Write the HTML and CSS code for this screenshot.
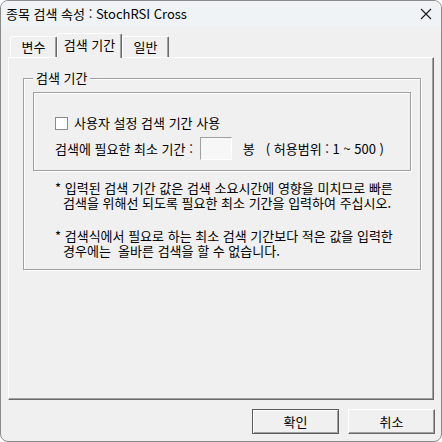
FILE: index.html
```html
<!DOCTYPE html>
<html lang="ko">

<head>
    <meta charset="UTF-8">
    <title>종목 검색 속성</title>
    <link rel="stylesheet" href="styles.css">
</head>

<body>

    <div class="window">
        <header class="titlebar">
            <span class="title">종목 검색 속성 : StochRSI Cross</span>
            <svg class="close" width="12" height="12" viewBox="0 0 12 12">
                <path d="M1 1 L11 11 M11 1 L1 11" stroke="#1a1a1a" stroke-width="1.1" fill="none" />
            </svg>
        </header>

        <nav class="tabs">
            <div class="tab">변수</div>
            <div class="tab valgt">검색 기간</div>
            <div class="tab">일반</div>
        </nav>

        <section class="panel">
            <fieldset class="gruppe">
                <legend>검색 기간</legend>

                <div class="indre">
                    <label class="raekke">
                        <span class="boks"></span>
                        <span>사용자 설정 검색 기간 사용</span>
                    </label>
                    <div class="raekke felt">
                        <span class="ledetekst">검색에 필요한 최소 기간 :</span>
                        <input class="tal" type="text">
                        <span class="bong">봉</span>
                        <span>( 허용범위 : 1 ~ 500 )</span>
                    </div>
                </div>

                <p class="note">* 입력된 검색 기간 값은 검색 소요시간에 영향을 미치므로 빠른 검색을 위해선 되도록 필요한 최소 기간을 입력하여 주십시오.</p>
                <p class="note">* 검색식에서 필요로 하는 최소 검색 기간보다 적은 값을 입력한 경우에는&nbsp; 올바른 검색을 할 수 없습니다.</p>
            </fieldset>
        </section>

        <footer class="knapper">
            <button class="knap standard">확인</button>
            <button class="knap">취소</button>
        </footer>
    </div>

</body>

</html>
```

FILE: styles.css
```css
body {
    margin: 0;
    background: #ffffff;
    font-family: "Noto Sans CJK KR", "Noto Sans", sans-serif;
    font-size: 13px;
    color: #000;
}

.window {
    width: 442px;
    height: 442px;
    box-sizing: border-box;
    border: 1px solid #8a8a8a;
    border-radius: 8px;
    overflow: hidden;
    background: #f0f0f0;
    display: flex;
    flex-direction: column;
}

.titlebar {
    height: 26px;
    flex: none;
    display: flex;
    align-items: center;
    justify-content: space-between;
    padding: 0 9px 0 5px;
    background: #eff3f6;
}

.title {
    line-height: 16px;
}

.tabs {
    display: flex;
    align-items: flex-end;
    height: 24px;
    margin-top: 6px;
    padding-left: 9px;
    flex: none;
}

.tab {
    height: 21px;
    line-height: 20px;
    box-sizing: border-box;
    padding: 0;
    text-align: center;
    white-space: nowrap;
    border-top: 1px solid #ffffff;
    border-left: 1px solid #ffffff;
    border-right: 1px solid #696969;
    box-shadow: inset -1px 0 0 #a0a0a0;
    border-radius: 2px 2px 0 0;
    background: #f0f0f0;
    width: 47px;
}

.tab.valgt {
    height: 25px;
    line-height: 21px;
    margin-bottom: -1px;
    position: relative;
    width: 65px;
}

.panel {
    height: 343px;
    flex: none;
    box-sizing: border-box;
    margin: 0 7px 0 7px;
    border-top: 1px solid #ffffff;
    border-left: 1px solid #ffffff;
    border-right: 1px solid #696969;
    border-bottom: 1px solid #696969;
    box-shadow: inset -1px -1px 0 #a0a0a0;
    padding: 12px 12px 0 14px;
}

.gruppe {
    margin: 0;
    padding: 6px 9px 11px 9px;
    border: 1px solid #a0a0a0;
    box-shadow: inset 1px 1px 0 #ffffff, 1px 1px 0 #ffffff;
    min-inline-size: 0;
}

.gruppe legend {
    margin-left: 0;
    padding: 0 3px;
    line-height: 16px;
    background: #f0f0f0;
}

.indre {
    border: 1px solid #a0a0a0;
    box-shadow: inset 1px 1px 0 #ffffff, 1px 1px 0 #ffffff;
    padding: 22px 0 10px 21px;
}

.raekke {
    display: flex;
    align-items: center;
    gap: 4px;
    line-height: 16px;
    white-space: nowrap;
}

.boks {
    width: 13px;
    height: 13px;
    box-sizing: border-box;
    border: 1px solid #8a8a8a;
    background: #ffffff;
    margin-right: 2px;
}

.felt {
    margin-top: 6px;
    gap: 4px;
}

.ledetekst {
    margin-right: 3px;
}

.tal {
    width: 32px;
    height: 23px;
    box-sizing: border-box;
    margin: 0;
    border-top: 1px solid #a0a0a0;
    border-left: 1px solid #a0a0a0;
    border-right: 1px solid #ffffff;
    border-bottom: 1px solid #ffffff;
    background: #f7f7f7;
}

.bong {
    margin: 0 7px 0 7px;
}

.note {
    margin: 9px 0 0 22px;
    padding-left: 8px;
    text-indent: -8px;
    line-height: 15px;
    word-break: keep-all;
}

.note + .note {
    margin-top: 18px;
}

.knapper {
    display: flex;
    justify-content: flex-end;
    gap: 9px;
    margin-top: 9px;
    padding-right: 6px;
}

.knap {
    width: 87px;
    height: 25px;
    font-family: inherit;
    font-size: 13px;
    background: #f0f0f0;
    border-top: 1px solid #ffffff;
    border-left: 1px solid #ffffff;
    border-right: 1px solid #696969;
    border-bottom: 1px solid #696969;
    box-shadow: inset -1px -1px 0 #a0a0a0;
    padding: 0;
}

.knap.standard {
    border: 1px solid #5a5a5a;
    box-shadow: inset 1px 1px 0 #ffffff, inset -1px -1px 0 #a0a0a0;
}
```
